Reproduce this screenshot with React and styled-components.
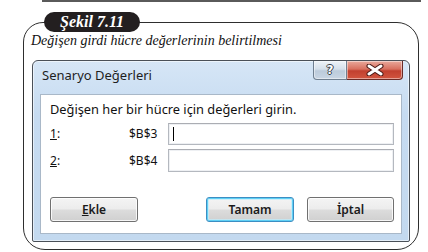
import React from "react";
import styled, { createGlobalStyle } from "styled-components";

const GlobalStyle = createGlobalStyle`
  html, body {
    margin: 0;
    padding: 0;
    background: #fff;
  }
  body {
    width: 428px;
    height: 252px;
    overflow: hidden;
  }
`;

const Page = styled.div`
  position: relative;
  width: 428px;
  height: 252px;
  background: #fff;
`;

const TopRule = styled.div`
  margin-left: 42px;
  width: 379px;
  height: 2px;
  background: #5a5a5a;
`;

const Frame = styled.div`
  box-sizing: border-box;
  margin: 20px 0 0 23px;
  width: 396px;
  height: 228px;
  border: 1px solid #2e2e2e;
  border-radius: 20px 22px 22px 22px;
  padding-top: 10px;
`;

const FigureTag = styled.div`
  position: absolute;
  left: 44px;
  top: 12px;
  width: 96px;
  height: 20px;
  border-radius: 10px;
  background: #231f20;
  color: #fff;
  font-family: "Liberation Serif", serif;
  font-style: italic;
  font-weight: 700;
  font-size: 16px;
  line-height: 20px;
  text-align: center;
`;

const Caption = styled.div`
  padding-left: 7px;
  font-family: "Liberation Serif", serif;
  font-style: italic;
  font-size: 14px;
  line-height: 16px;
  color: #111;
`;

const Dialog = styled.div`
  box-sizing: border-box;
  display: flex;
  flex-direction: column;
  margin: 11px 0 0 8px;
  width: 378px;
  height: 182px;
  border: 1px solid #4a5058;
  border-radius: 6px 6px 2px 2px;
  background: linear-gradient(to bottom, #d6e6f6 0%, #c6dbf1 30%, #c3d9ef 100%);
  box-shadow: inset 0 0 0 1px rgba(255, 255, 255, 0.55);
  font-family: "Noto Sans", "Open Sans", sans-serif;
`;

const TitleBar = styled.div`
  display: flex;
  align-items: flex-start;
  height: 33px;
  padding: 0 6px 0 9px;
`;

const Title = styled.div`
  margin-top: 5px;
  font-size: 13px;
  line-height: 18px;
  color: #1e1e1e;
`;

const CaptionButtons = styled.div`
  display: flex;
  margin-left: auto;
`;

const CaptionButton = styled.div`
  box-sizing: border-box;
  display: flex;
  align-items: center;
  justify-content: center;
  width: ${(p) => (p.$close ? "56px" : "34px")};
  height: 19px;
  border: 1px solid ${(p) => (p.$close ? "#6a2b26" : "#6f7f90")};
  border-top: none;
  border-left-width: ${(p) => (p.$close ? "0" : "1px")};
  border-radius: ${(p) => (p.$close ? "0 0 4px 0" : "0 0 0 4px")};
  background: ${(p) =>
    p.$close
      ? "linear-gradient(to bottom, #e9a99c 0%, #d8705f 45%, #c2402f 55%, #d2553f 100%)"
      : "linear-gradient(to bottom, #eef3f8 0%, #d5e0eb 45%, #bccbdb 55%, #c9d6e4 100%)"};
  box-shadow: inset 0 0 0 1px rgba(255, 255, 255, 0.45);
`;

const HelpGlyph = styled.span`
  font-family: "DejaVu Sans", sans-serif;
  font-weight: 700;
  font-size: 12px;
  line-height: 1;
  color: #fff;
  text-shadow: 1px 0 #3a4048, -1px 0 #3a4048, 0 1px #3a4048, 0 -1px #3a4048;
`;

const Panel = styled.div`
  flex: 1;
  display: flex;
  flex-direction: column;
  margin: 0 7px 7px;
  padding: 6px 7px 0 9px;
  background: #fff;
  border: 1px solid #a9b8c8;
  color: #111;
  font-size: 12px;
`;

const Instruction = styled.div`
  font-size: 12.8px;
  line-height: 16px;
`;

const Fields = styled.div`
  display: grid;
  grid-template-columns: 79px 39px 1fr;
  row-gap: 4px;
  align-items: center;
  margin-top: 6px;
  line-height: 16px;
`;

const Key = styled.span`
  text-decoration: underline;
`;

const TextBox = styled.div`
  box-sizing: border-box;
  display: flex;
  align-items: center;
  height: ${(p) => p.$h || "22px"};
  border: 1px solid #b4b8bf;
  border-top-color: #abadb3;
  box-shadow: inset 0 0 0 1px #eef0f3;
  background: #fff;
`;

const Caret = styled.span`
  display: block;
  width: 1px;
  height: 14px;
  margin-left: 4px;
  background: #000;
`;

const Actions = styled.div`
  display: flex;
  margin-top: 25px;
`;

const Button = styled.div`
  box-sizing: border-box;
  width: ${(p) => p.$w || "88px"};
  height: 25px;
  margin-left: ${(p) => p.$ml || "0"};
  border: 1px solid ${(p) => (p.$default ? "#3c8ec3" : "#707070")};
  border-radius: 3px;
  background: linear-gradient(to bottom, #f4f4f4 0%, #ececec 48%, #dcdcdc 52%, #d0d0d0 100%);
  box-shadow: ${(p) =>
    p.$default
      ? "inset 0 0 0 1px #5fd0f5, inset 0 0 0 2px rgba(190, 236, 252, 0.7)"
      : "inset 0 0 0 1px rgba(255, 255, 255, 0.8)"};
  text-align: center;
  font-weight: 600;
  font-size: 12px;
  line-height: 23px;
  color: #1a1a1a;
`;

const CloseIcon = () => (
  <svg width="18" height="12" viewBox="0 0 18 12">
    <path d="M3 2 L15 10 M15 2 L3 10" stroke="#4a1a16" strokeWidth="5" strokeLinecap="round" />
    <path d="M3 2 L15 10 M15 2 L3 10" stroke="#fff" strokeWidth="3" strokeLinecap="round" />
  </svg>
);

export default function App() {
  return (
    <Page>
      <GlobalStyle />
      <TopRule />
      <Frame>
        <Caption>Değişen girdi hücre değerlerinin belirtilmesi</Caption>
        <Dialog>
          <TitleBar>
            <Title>Senaryo Değerleri</Title>
            <CaptionButtons>
              <CaptionButton>
                <HelpGlyph>?</HelpGlyph>
              </CaptionButton>
              <CaptionButton $close>
                <CloseIcon />
              </CaptionButton>
            </CaptionButtons>
          </TitleBar>
          <Panel>
            <Instruction>Değişen her bir hücre için değerleri girin.</Instruction>
            <Fields>
              <span>
                <Key>1</Key>:
              </span>
              <span>$B$3</span>
              <TextBox>
                <Caret />
              </TextBox>
              <span>
                <Key>2</Key>:
              </span>
              <span>$B$4</span>
              <TextBox $h="23px" />
            </Fields>
            <Actions>
              <Button>
                <Key>E</Key>kle
              </Button>
              <Button $default $ml="auto">
                Tamam
              </Button>
              <Button $w="87px" $ml="13px">
                İptal
              </Button>
            </Actions>
          </Panel>
        </Dialog>
      </Frame>
      <FigureTag>Şekil 7.11</FigureTag>
    </Page>
  );
}
